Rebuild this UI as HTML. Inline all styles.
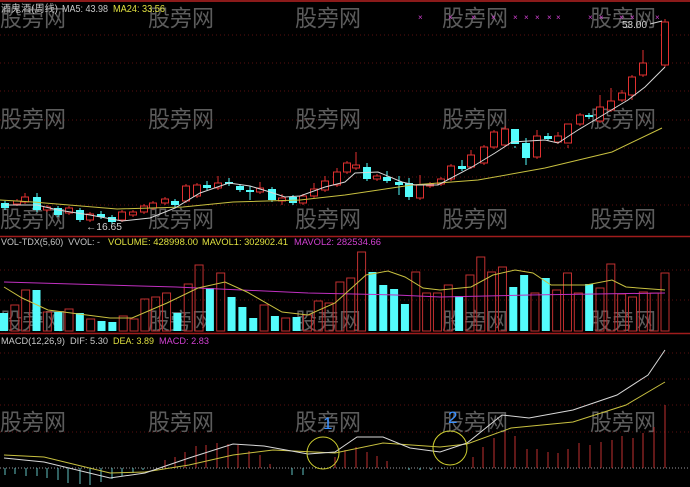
<!DOCTYPE html>
<html><head><meta charset="utf-8"><style>
html,body{margin:0;padding:0;background:#000;width:690px;height:487px;overflow:hidden}
svg{display:block}
text{font-family:"Liberation Sans","Noto Sans CJK SC",sans-serif}
</style></head><body>
<svg id="s" width="690" height="487" xmlns="http://www.w3.org/2000/svg"></svg>
<script>
var h='';
function L(x1,y1,x2,y2,c,w,d){h+='<line x1="'+x1+'" y1="'+y1+'" x2="'+x2+'" y2="'+y2+'" stroke="'+c+'" stroke-width="'+(w||1)+'"'+(d?' stroke-dasharray="'+d+'"':'')+'/>';}
function P(pts,c){h+='<polyline fill="none" stroke="'+c+'" stroke-width="1" points="'+pts.map(function(p){return p.join(',')}).join(' ')+'"/>';}
function T(x,y,s,c,fs,tl){h+='<text x="'+x+'" y="'+y+'" fill="'+c+'" font-size="'+(fs||10)+'"'+(tl?' textLength="'+tl+'" lengthAdjust="spacingAndGlyphs"':'')+'>'+s+'</text>';}
// frame lines
L(0,1,690,1,'#8b1a1a',2);
L(0,236.5,690,236.5,'#a01c1c',1.5);
L(0,333.5,690,333.5,'#a01c1c',1.5);
[35,63,91,120,148,177,205].forEach(function(y){L(0,y,690,y,'#5a1010',1,'1,3');});
[270,300].forEach(function(y){L(0,y,690,y,'#5a1010',1,'1,3');});
[353,379,405,432].forEach(function(y){L(0,y,690,y,'#5a1010',1,'1,3');});
L(0,468,690,468,'#9a9aa0',1,'1,2');
// watermarks
[14,115,215,317,418].forEach(function(y){[0,148,295,442,590].forEach(function(x){T(x,y+12,'股旁网','#5c5c5c',23,66);});});
var C=[[5,203,208,'c'],[17,201,204,'r'],[25,197,202,'r',193],[37,197,210,'c',193,212],[47,207,210,'r'],[58,208,215,'c'],[69,208,213,'r'],[80,210,220,'c'],[90,214,220,'r'],[101,214,217,'c',211],[112,217,222,'c'],[122,212,220,'r'],[133,212,215,'r'],[144,206,212,'r'],[153,203,208,'r'],[165,199,203,'r'],[175,201,205,'c'],[186,186,201,'r'],[197,185,196,'r'],[207,185,188,'c',181],[218,183,188,'r',176],[229,182,184,'c',178],[240,186,190,'c'],[250,190,192,'c',186,200],[260,188,192,'r',182],[272,189,200,'c'],[282,198,201,'r',194,205],[293,197,203,'c'],[303,196,203,'r'],[314,189,196,'r',183],[325,181,190,'r',176],[337,172,185,'r',168],[347,163,172,'r'],[356,165,168,'r',152],[367,167,179,'c',163],[377,176,179,'r'],[387,177,181,'c',171],[399,182,185,'c',176,195],[409,183,197,'c',178,200],[420,185,198,'r',175,200],[430,184,186,'r'],[441,179,184,'r'],[451,166,179,'r'],[462,166,169,'c',160],[471,155,167,'r',150],[484,147,163,'r'],[494,132,147,'r'],[505,129,145,'r',126],[515,129,144,'c',148],[526,143,158,'c',138,165],[537,136,157,'r',130],[548,136,139,'c',133],[558,136,142,'r',132],[568,124,143,'r',148],[580,115,124,'r'],[589,115,117,'c'],[600,107,121,'r',95],[611,101,110,'r',88],[622,93,100,'r',90],[632,77,95,'r',75,100],[643,63,75,'r',50],[665,22,65,'r',19]];
C.forEach(function(k){var x=k[0],c=k[3]=='r'?'#e03030':'#54fcfc';var wt=k[4]||k[1]-2,wb=k[5]||k[2]+2;
L(x,wt,x,wb,c,1);
if(k[3]=='r'){h+='<rect x="'+(x-3.5)+'" y="'+k[1]+'" width="7" height="'+Math.max(1,k[2]-k[1])+'" fill="#000" stroke="'+c+'" stroke-width="1"/>';}
else{h+='<rect x="'+(x-4)+'" y="'+k[1]+'" width="8" height="'+Math.max(1.5,k[2]-k[1])+'" fill="'+c+'"/>';}});
P([[0,200],[33,202],[117,209],[183,207],[233,202],[300,200],[345,195],[412,185],[478,180],[545,168],[612,152],[662,128]],'#c8c040');
P([[5,205],[37,205],[58,210],[90,215],[122,221],[150,218],[175,208],[200,193],[229,183],[250,186],[270,192],[285,197],[300,196],[325,187],[345,182],[355,173],[378,172],[402,182],[415,185],[438,185],[472,167],[495,153],[512,142],[545,140],[558,143],[578,130],[598,118],[628,100],[645,87],[665,67]],'#d8d8d8');
[421,451,474,494,516,527,538,550,559,591,602,622,633,658].forEach(function(x){T(x-3,20,'×','#d040d0',8);});
T(622,28,'53.00','#d0d0d0',10);L(650,24,662,21,'#d0d0d0');
T(86,230,'←16.65','#d0d0d0',10,36);
T(1,12,'酒鬼酒(周线)','#c8c8c8',10,57);T(62,12,'MA5: 43.98','#c8c8c8',10,46);T(113,12,'MA24: 33.56','#e0e040',10,52);
var V=[[313,'c'],[305,'r'],[290,'r'],[290,'c'],[312,'r'],[312,'c'],[309,'r'],[313,'c'],[319,'r'],[321,'c'],[322,'c'],[316,'r'],[319,'r'],[299,'r'],[297,'r'],[293,'r'],[313,'c'],[284,'r'],[265,'r'],[288,'c'],[273,'r'],[297,'c'],[307,'c'],[318,'c'],[305,'r'],[316,'c'],[318,'r'],[317,'c'],[315,'r'],[301,'r'],[303,'r'],[282,'r'],[278,'r'],[252,'r'],[272,'c'],[285,'c'],[289,'c'],[304,'c'],[272,'r'],[293,'r'],[293,'r'],[285,'r'],[296,'c'],[275,'r'],[257,'r'],[272,'r'],[267,'r'],[287,'c'],[275,'c'],[293,'r'],[278,'c'],[290,'r'],[273,'r'],[293,'r'],[284,'c'],[288,'r'],[264,'r'],[294,'r'],[297,'r'],[292,'r'],[293,'r'],[273,'r']];
var step=(665-4)/(V.length-1);
V.forEach(function(v,i){var x=4+i*step;if(v[1]=='r')h+='<rect x="'+(x-4)+'" y="'+v[0]+'" width="8" height="'+(331-v[0])+'" fill="none" stroke="#c03030" stroke-width="1"/>';else h+='<rect x="'+(x-4)+'" y="'+v[0]+'" width="8" height="'+(331-v[0])+'" fill="#54fcfc"/>';});
P([[4,282],[176,287],[308,293],[396,295],[440,297],[529,295],[665,293]],'#c030c0');
P([[4,287],[22,298],[48,310],[110,318],[132,318],[167,303],[198,288],[225,282],[247,292],[282,312],[308,315],[335,303],[366,275],[388,271],[405,277],[423,288],[440,290],[471,287],[493,275],[515,270],[533,273],[551,285],[586,285],[612,280],[626,287],[665,290]],'#c8c040');
T(1,245,'VOL-TDX(5,60)&#160; VVOL: -','#c8c8c8',9.5,99);T(108,245,'VOLUME: 428998.00','#e0e040',9.5,90);T(202,245,'MAVOL1: 302902.41','#e0e040',9.5,86);T(294,245,'MAVOL2: 282534.66','#d040d0',9.5,87);
[[5,475],[15,474],[26,476],[37,476],[47,478],[58,480],[68,483],[80,484],[90,485],[101,482],[112,479],[122,476],[133,473],[143,470],[292,475],[303,475],[409,470],[420,470],[431,470],[442,469]].forEach(function(b){L(b[0],468,b[0],b[1],'#60c0c0');});
[[165,460],[175,457],[185,452],[196,446],[206,445],[217,443],[228,444],[238,445],[249,451],[260,455],[270,464],[335,457],[345,450],[356,447],[367,452],[377,456],[387,461],[473,457],[483,447],[494,438],[505,431],[515,436],[527,449],[537,449],[548,452],[558,453],[568,449],[579,443],[590,445],[601,442],[612,440],[622,436],[633,438],[643,433],[654,427],[665,405]].forEach(function(b){L(b[0],468,b[0],b[1],'#c03030');});
P([[4,455],[44,457],[110,473],[145,472],[189,465],[233,455],[273,450],[335,453],[383,443],[440,447],[467,444],[511,428],[573,422],[626,405],[665,382]],'#c8c040');
P([[4,458],[44,462],[110,478],[145,473],[189,458],[233,444],[264,446],[308,454],[335,452],[357,437],[383,437],[410,448],[440,452],[467,443],[502,415],[529,418],[573,410],[617,395],[648,375],[665,350]],'#d8d8d8');
h+='<circle cx="323" cy="453" r="16" fill="none" stroke="#d0d030" stroke-width="1"/><circle cx="450" cy="448" r="17" fill="none" stroke="#d0d030" stroke-width="1"/>';
T(323,429,'1','#3a90ff',17);T(448,423,'2','#3a90ff',17);
T(1,344,'MACD(12,26,9)','#c8c8c8',9.5,64);T(70,344,'DIF: 5.30','#c8c8c8',9.5,38);T(113,344,'DEA: 3.89','#e0e040',9.5,41);T(159,344,'MACD: 2.83','#d040d0',9.5,50);
document.getElementById('s').innerHTML=h;
</script>
</body></html>
